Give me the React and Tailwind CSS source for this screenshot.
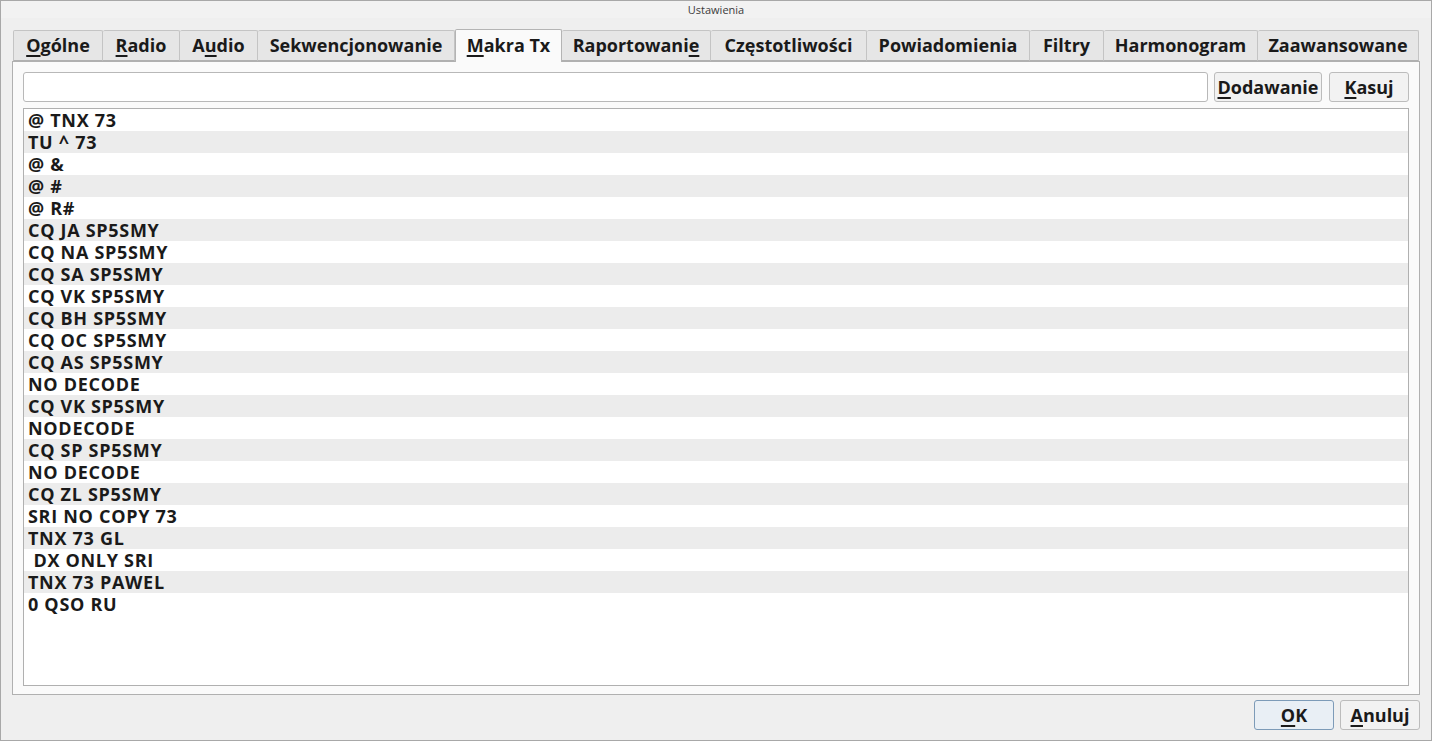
import React from "react";

const F = { fontFamily: '"Open Sans", "DejaVu Sans", sans-serif' };

function M({ children }) {
  return <span className="underline decoration-2 underline-offset-[3px]">{children}</span>;
}

const tabs = [
  { w: 90, label: <><M>O</M>gólne</> },
  { w: 77, label: <><M>R</M>adio</> },
  { w: 78, label: <>A<M>u</M>dio</> },
  { w: 197, label: <>Sekwencjonowanie</> },
  { w: 107, label: <><M>M</M>akra Tx</>, active: true },
  { w: 149, label: <>Raportowani<M>e</M></> },
  { w: 156, label: <>Częstotliwości</> },
  { w: 163, label: <>Powiadomienia</> },
  { w: 74, label: <>Filtry</> },
  { w: 154, label: <>Harmonogram</> },
  { w: 161, label: <>Zaawansowane</> },
];

const items = [
  "@ TNX 73",
  "TU ^ 73",
  "@ &",
  "@ #",
  "@ R#",
  "CQ JA SP5SMY",
  "CQ NA SP5SMY",
  "CQ SA SP5SMY",
  "CQ VK SP5SMY",
  "CQ BH SP5SMY",
  "CQ OC SP5SMY",
  "CQ AS SP5SMY",
  "NO DECODE",
  "CQ VK SP5SMY",
  "NODECODE",
  "CQ SP SP5SMY",
  "NO DECODE",
  "CQ ZL SP5SMY",
  "SRI NO COPY 73",
  "TNX 73 GL",
  "\u00a0DX ONLY SRI",
  "TNX 73 PAWEL",
  "0 QSO RU",
];

export default function App() {
  return (
    <div style={F} className="w-[1432px] h-[741px] bg-[#efefef] border border-[#a8a8a8] flex flex-col text-[#1a1a1a] overflow-hidden">
      <div className="h-[17px] bg-[#f2f2f2] flex items-center justify-center text-[11px] text-[#3c3c3c] leading-none">
        Ustawienia
      </div>
      <div className="flex-1 flex flex-col px-[11px] pt-[10px]">
        <div className="flex items-end h-[33px] pl-[1px] relative z-10">
          {tabs.map((t, i) => (
            <div
              key={i}
              style={{ width: t.w }}
              className={
                t.active
                  ? "h-[33px] bg-[#fafafa] border border-[#b4b4b4] border-b-0 rounded-t-[2px] flex items-center justify-center text-[18px] font-bold mb-[-1px] pb-[2px]"
                  : "h-[31px] bg-[#e6e6e6] border border-[#c4c4c4] border-l-0 first:border-l border-b-[#b0b0b0] rounded-t-[2px] flex items-center justify-center text-[18px] font-bold"
              }
            >
              {t.label}
            </div>
          ))}
        </div>
        <div className="h-[634px] bg-[#fafafa] border border-[#b0b0b0] flex flex-col px-[10px] pt-[10px]">
          <div className="flex items-center gap-[6px] h-[30px]">
            <div className="flex-1 h-[30px] bg-white border border-[#b8b8b8] rounded-[3px]"></div>
            <button className="w-[108px] h-[30px] bg-[#f2f2f2] border border-[#bcbcbc] rounded-[3px] text-[18px] font-bold">
              <M>D</M>odawanie
            </button>
            <button className="w-[80px] h-[30px] bg-[#f2f2f2] border border-[#bcbcbc] rounded-[3px] text-[18px] font-bold ml-[1px]">
              <M>K</M>asuj
            </button>
          </div>
          <div className="mt-[6px] h-[578px] w-[1386px] bg-white border border-[#b0b0b0]">
            {items.map((s, i) => (
              <div
                key={i}
                className={
                  (i % 2 === 1 ? "bg-[#ececec] " : "bg-white ") +
                  "h-[22px] flex items-center pl-[4px] text-[18px] font-bold tracking-[0.7px] whitespace-pre leading-none"
                }
              >
                {s}
              </div>
            ))}
          </div>
        </div>
        <div className="flex justify-end gap-[6px] pt-[5px]">
          <button className="w-[80px] h-[30px] bg-[#e9eff5] border border-[#7d9bb8] rounded-[3px] text-[18px] font-bold">
            <M>O</M>K
          </button>
          <button className="w-[80px] h-[30px] bg-[#f2f2f2] border border-[#bcbcbc] rounded-[3px] text-[18px] font-bold">
            <M>A</M>nuluj
          </button>
        </div>
      </div>
    </div>
  );
}
